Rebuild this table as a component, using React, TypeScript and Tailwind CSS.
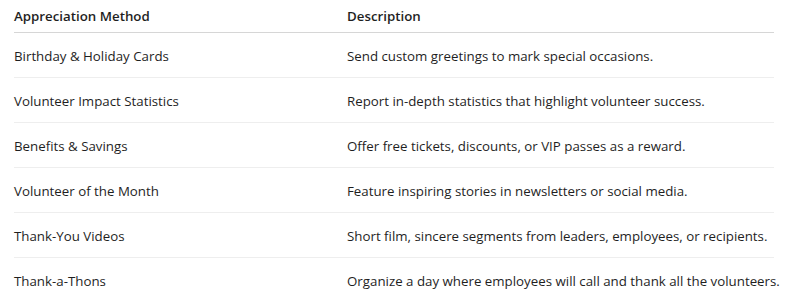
const rows = [
  ["Birthday & Holiday Cards", "Send custom greetings to mark special occasions."],
  ["Volunteer Impact Statistics", "Report in-depth statistics that highlight volunteer success."],
  ["Benefits & Savings", "Offer free tickets, discounts, or VIP passes as a reward."],
  ["Volunteer of the Month", "Feature inspiring stories in newsletters or social media."],
  ["Thank-You Videos", "Short film, sincere segments from leaders, employees, or recipients."],
  ["Thank-a-Thons", "Organize a day where employees will call and thank all the volunteers."],
];

export default function App() {
  return (
    <div className="bg-white w-[788px] h-[301px] overflow-hidden px-[14px] text-[#1f1f1f] text-[13.3px] font-['Open_Sans',sans-serif]">
      <div className="grid grid-cols-[333px_1fr] h-[33px] pt-[2px] items-center border-b border-[#d6d6d6] font-semibold">
        <div>Appreciation Method</div>
        <div>Description</div>
      </div>
      {rows.map(([method, desc]) => (
        <div key={method} className="grid grid-cols-[333px_1fr] h-[45px] pt-[3px] items-center border-b border-[#eeeeee]">
          <div className="whitespace-nowrap">{method}</div>
          <div className="whitespace-nowrap">{desc}</div>
        </div>
      ))}
    </div>
  );
}
